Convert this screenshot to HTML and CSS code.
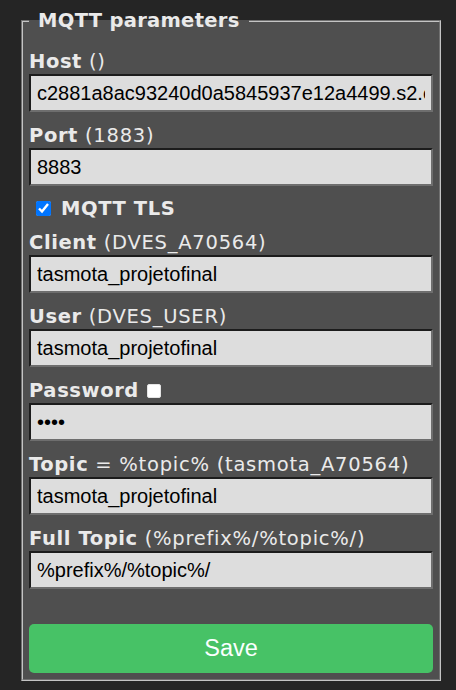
FILE: index.html
```html
<!DOCTYPE html>
<html>
<head>
<meta charset="utf-8">
<link rel="stylesheet" href="styles.css">
</head>
<body>
<div class="page">
  <fieldset class="box">
    <legend class="legend">&nbsp;MQTT parameters&nbsp;</legend>
    <form class="form">
      <div class="field">
        <div class="lbl"><b>Host</b> ()</div>
        <input class="inp" type="text" value="c2881a8ac93240d0a5845937e12a4499.s2.eu.hivemq.cloud">
      </div>
      <div class="field">
        <div class="lbl"><b>Port</b> (1883)</div>
        <input class="inp" type="text" value="8883">
      </div>
      <label class="tls"><input class="chk" type="checkbox" checked><b>MQTT TLS</b></label>
      <div class="field">
        <div class="lbl"><b>Client</b> (DVES_A70564)</div>
        <input class="inp" type="text" value="tasmota_projetofinal">
      </div>
      <div class="field">
        <div class="lbl"><b>User</b> (DVES_USER)</div>
        <input class="inp" type="text" value="tasmota_projetofinal">
      </div>
      <div class="field">
        <div class="lbl"><b>Password</b><input class="chk-off" type="checkbox"></div>
        <input class="inp" type="password" value="1234">
      </div>
      <div class="field">
        <div class="lbl"><b>Topic</b> = %topic% (tasmota_A70564)</div>
        <input class="inp" type="text" value="tasmota_projetofinal">
      </div>
      <div class="field">
        <div class="lbl"><b>Full Topic</b> (%prefix%/%topic%/)</div>
        <input class="inp" type="text" value="%prefix%/%topic%/">
      </div>
      <button class="save" type="button">Save</button>
    </form>
  </fieldset>
</div>
</body>
</html>
```
FILE: styles.css
```css
html, body {
  margin: 0;
  padding: 0;
  background: #252525;
}
.page {
  padding: 10px 15px 0 21px;
  width: 420px;
  font-family: "DejaVu Sans", Verdana, sans-serif;
  color: #eaeaea;
}
.box {
  margin: 0;
  background: #4f4f4f;
  border: 2px groove #c4c4c4;
  padding: 18px 6px 6px 6px;
  min-width: 0;
}
.legend {
  font-weight: bold;
  font-size: 19.5px;
  line-height: 22px;
  padding: 0 2px;
  letter-spacing: 0.3px;
  color: #eaeaea;
}
.form {
  display: flex;
  flex-direction: column;
  gap: 12px;
  margin: 0;
}
.field {
  display: flex;
  flex-direction: column;
  gap: 1px;
}
.lbl {
  font-size: 19.5px;
  line-height: 23px;
  height: 23px;
  white-space: nowrap;
  letter-spacing: 0.75px;
}
.lbl b,
.tls b {
  letter-spacing: 0.6px;
}
.inp {
  box-sizing: border-box;
  width: 100%;
  height: 38px;
  margin: 0;
  padding: 0 6px;
  background: #dddddd;
  color: #000000;
  font-family: "Liberation Sans", Arial, sans-serif;
  font-size: 20px;
  letter-spacing: 0;
  border-style: solid;
  border-width: 2px;
  border-color: #1c1c1c #6e6e6e #6e6e6e #1c1c1c;
  outline: none;
}
.tls {
  display: flex;
  align-items: center;
  height: 21px;
  font-size: 19.5px;
  line-height: 21px;
}
.chk {
  width: 15px;
  height: 15px;
  margin: 0 10px 0 7px;
  accent-color: #0075ff;
}
.chk-off {
  appearance: none;
  -webkit-appearance: none;
  display: inline-block;
  width: 14px;
  height: 14px;
  margin: 0 0 0 8px;
  background: #ffffff;
  border: 1px solid #e4e4e4;
  border-radius: 2px;
  box-sizing: border-box;
  vertical-align: -1px;
}
.save {
  margin-top: 23px;
  height: 49px;
  width: 100%;
  border: 0;
  border-radius: 5px;
  background: #47c266;
  color: #faffff;
  font-family: "Liberation Sans", Arial, sans-serif;
  font-size: 23.5px;
  padding: 0;
}
```
